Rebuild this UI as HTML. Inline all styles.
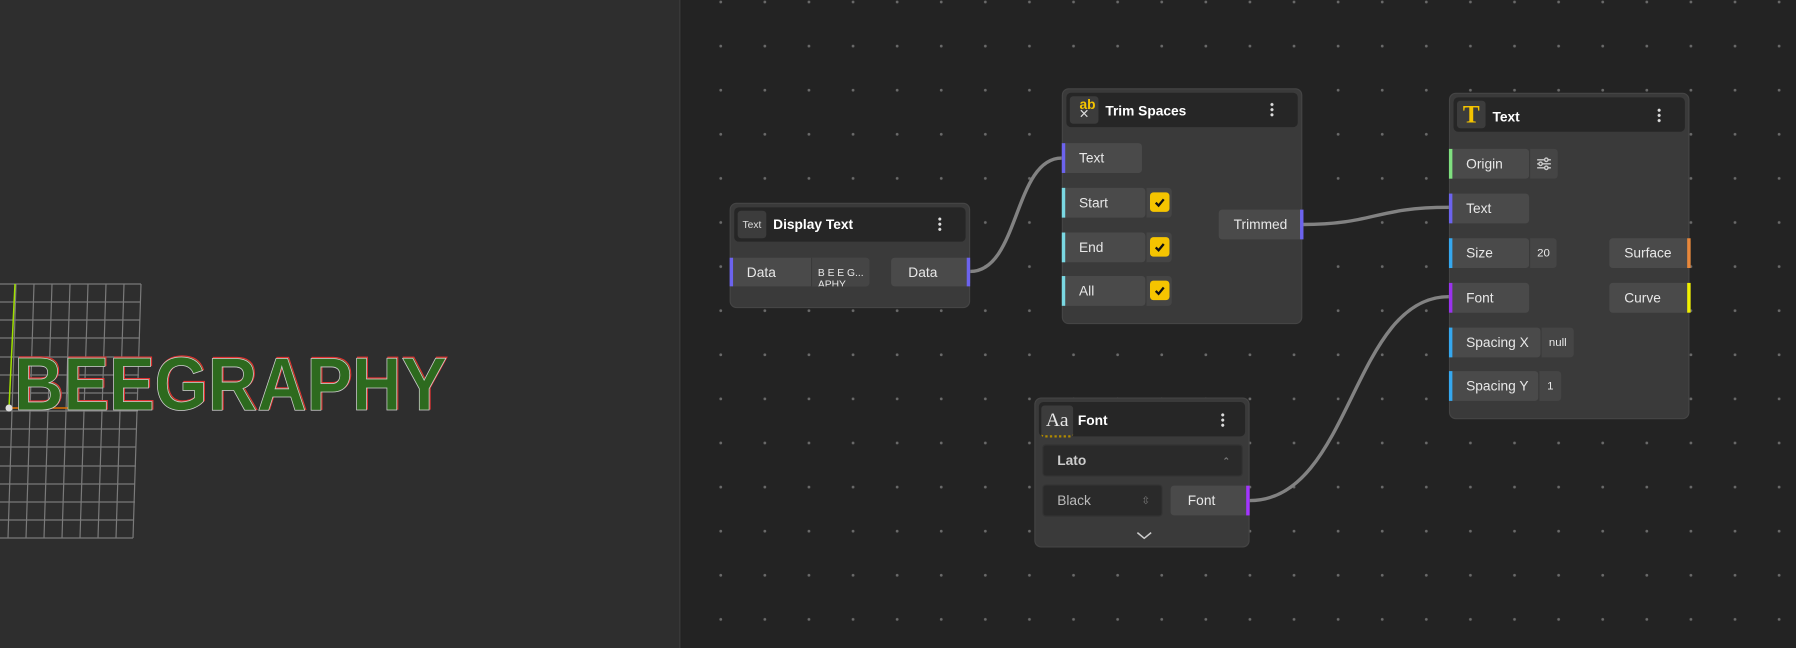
<!DOCTYPE html>
<html><head><meta charset="utf-8"><style>
*{margin:0;padding:0;box-sizing:border-box}
body{width:1796px;height:648px;overflow:hidden;background:#232323;font-family:"Liberation Sans",sans-serif;position:relative}
#w{position:absolute;left:0;top:0;width:1568px;height:566px;transform:scale(1.14541);transform-origin:0 0}
.left{position:absolute;left:0;top:0;width:594px;height:566px;background:#2e2e2e;border-right:1px solid #3c3c3c}
.canvas{position:absolute;left:595px;top:0;right:0;bottom:0;background-color:#232323;background-image:radial-gradient(circle,#6a6a6a 0 1.1px,transparent 1.4px);background-size:38.5px 38.5px;background-position:15px 21px}
.a{position:absolute}
.node{position:absolute;background:#3a3a3a;border-radius:6px;border:1px solid #454545}
.hd{position:absolute;background:#262626;border-radius:4px}
.ic{position:absolute;background:#3c3c3c;border-radius:3px;color:#ddd;font-size:9px;display:flex;align-items:center;justify-content:center}
.tt{position:absolute;color:#fff;font-weight:bold;font-size:12px}
.dots{position:absolute;width:3px;height:13px;background:radial-gradient(circle,#ddd 1.2px,transparent 1.5px) 0 0/3px 4.5px repeat-y}
.r{position:absolute;background:#4a4a4a;border-radius:3px;color:#e8e8e8;font-size:12px;display:flex;align-items:center;padding-left:15px;height:26px}
.v{position:absolute;background:#454545;border-radius:0 3px 3px 0;border-left:1px solid #3a3a3a;color:#e8e8e8;font-size:10px;display:flex;align-items:center;justify-content:center;height:26px}
.bl{position:absolute;left:0;top:0;width:3px;height:100%}
.br{position:absolute;right:0;top:0;width:3px;height:100%}
.cb{position:absolute;left:3px;top:4px;width:17px;height:17px;background:#f5c400;border-radius:3px}
.sel{position:absolute;background:#2a2a2a;border-radius:3px;border:1px solid #333;color:#bbb;font-size:12px;display:flex;align-items:center;padding-left:12px}
</style></head><body>
<div id="w">
<div class="left"></div>
<div class="canvas"></div>

<svg class="a" style="left:0;top:0" width="1568" height="566">
<g fill="none" stroke="#828282" stroke-width="3">
<path d="M847,237 C890,237 885,138 927,138"/>
<path d="M1137,196 C1200,196 1200,181 1265,181"/>
<path d="M1091,437 C1180,437 1180,259 1265,259"/>
</g></svg>

<!-- Display Text -->
<div class="node" style="left:637px;top:177px;width:210px;height:92px">
<div class="hd" style="left:3px;top:3px;width:202px;height:30px"></div>
<div class="ic" style="left:6px;top:6px;width:25px;height:24px">Text</div>
<div class="tt" style="left:37px;top:11px">Display Text</div>
<div class="dots" style="left:181px;top:11px"></div>
<div class="r" style="left:-1px;top:47px;width:122px;height:25px">Data<div class="bl" style="background:#6c63ee"></div></div>
<div class="v" style="left:70px;top:47px;width:51px;height:25px;font-size:9px;overflow:hidden;align-items:flex-start;padding-top:8px;line-height:10px;justify-content:flex-start;padding-left:5px">B E E G...<br>APHY</div>
<div class="r" style="left:140px;top:47px;width:69px;height:25px">Data<div class="br" style="background:#6c63ee"></div></div>
</div>

<!-- Trim Spaces -->
<div class="node" style="left:927px;top:77px;width:210px;height:206px">
<div class="hd" style="left:3px;top:3px;width:202px;height:30px"></div>
<div class="ic" style="left:6px;top:6px;width:25px;height:24px;flex-direction:column;line-height:9px"><span style="color:#f5c400;font-size:12px;font-weight:bold;margin-left:6px">ab</span><span style="font-size:11px">✕</span></div>
<div class="tt" style="left:37px;top:12px">Trim Spaces</div>
<div class="dots" style="left:181px;top:11px"></div>
<div class="r" style="left:-1px;top:47px;width:70px">Text<div class="bl" style="background:#6c63ee"></div></div>
<div class="r" style="left:-1px;top:86px;width:73px">Start<div class="bl" style="background:#7ad8e2"></div></div>
<div class="v" style="left:72px;top:86px;width:23px"><div class="cb"><svg width="17" height="17"><path d="M5 9l2.5 2.5L12 6" stroke="#111" stroke-width="2" fill="none"/></svg></div></div>
<div class="r" style="left:-1px;top:125px;width:73px">End<div class="bl" style="background:#7ad8e2"></div></div>
<div class="v" style="left:72px;top:125px;width:23px"><div class="cb"><svg width="17" height="17"><path d="M5 9l2.5 2.5L12 6" stroke="#111" stroke-width="2" fill="none"/></svg></div></div>
<div class="r" style="left:-1px;top:163px;width:73px">All<div class="bl" style="background:#7ad8e2"></div></div>
<div class="v" style="left:72px;top:163px;width:23px"><div class="cb"><svg width="17" height="17"><path d="M5 9l2.5 2.5L12 6" stroke="#111" stroke-width="2" fill="none"/></svg></div></div>
<div class="r" style="left:136px;top:105px;width:74px;padding-left:13px">Trimmed<div class="br" style="background:#6c63ee"></div></div>
</div>

<!-- Text node -->
<div class="node" style="left:1265px;top:81px;width:210px;height:285px">
<div class="hd" style="left:3px;top:3px;width:202px;height:30px"></div>
<div class="ic" style="left:6px;top:6px;width:25px;height:24px;font-family:'Liberation Serif',serif;font-size:22px;font-weight:bold;color:#f5c400">T</div>
<div class="tt" style="left:37px;top:13px">Text</div>
<div class="dots" style="left:181px;top:12px"></div>
<div class="r" style="left:-1px;top:48px;width:70px">Origin<div class="bl" style="background:#7fe07f"></div></div>
<div class="v" style="left:69px;top:48px;width:25px"><svg width="14" height="12"><g stroke="#ccc" stroke-width="1.2" fill="#454545"><path d="M1 2.5h12M1 6h12M1 9.5h12"/><circle cx="9" cy="2.5" r="1.5"/><circle cx="4" cy="6" r="1.5"/><circle cx="9" cy="9.5" r="1.5"/></g></svg></div>
<div class="r" style="left:-1px;top:87px;width:70px">Text<div class="bl" style="background:#6c63ee"></div></div>
<div class="r" style="left:-1px;top:126px;width:70px">Size<div class="bl" style="background:#35a8ef"></div></div>
<div class="v" style="left:69px;top:126px;width:24px">20</div>
<div class="r" style="left:139px;top:126px;width:71px;padding-left:13px">Surface<div class="br" style="background:#e8873a"></div></div>
<div class="r" style="left:-1px;top:165px;width:70px">Font<div class="bl" style="background:#9a32ee"></div></div>
<div class="r" style="left:139px;top:165px;width:71px;padding-left:13px">Curve<div class="br" style="background:#f0f000"></div></div>
<div class="r" style="left:-1px;top:204px;width:80px">Spacing X<div class="bl" style="background:#35a8ef"></div></div>
<div class="v" style="left:79px;top:204px;width:29px">null</div>
<div class="r" style="left:-1px;top:242px;width:78px">Spacing Y<div class="bl" style="background:#35a8ef"></div></div>
<div class="v" style="left:77px;top:242px;width:20px">1</div>
</div>

<!-- Font node -->
<div class="node" style="left:903px;top:347px;width:188px;height:131px">
<div class="hd" style="left:3px;top:3px;width:180px;height:30px"></div>
<div class="ic" style="left:5px;top:6px;width:28px;height:28px;font-family:'Liberation Serif',serif;font-size:17px;color:#e8e8e8;border-bottom:2px dotted #b08a00">Aa</div>
<div class="tt" style="left:37px;top:12px">Font</div>
<div class="dots" style="left:162px;top:12px"></div>
<div class="sel" style="left:6px;top:40px;width:175px;height:28px;font-weight:bold;color:#ccc">Lato<span style="position:absolute;right:10px;font-size:8px;color:#777">⌃<br></span></div>
<div class="sel" style="left:6px;top:75px;width:105px;height:28px">Black<span style="position:absolute;right:10px;font-size:9px;color:#777">⇳</span></div>
<div class="r" style="left:118px;top:76px;width:69px;height:26px;padding-left:15px">Font<div class="br" style="background:#a335ff"></div></div>
<svg class="a" style="left:88px;top:116px" width="14" height="8"><path d="M1 1l6 5 6-5" stroke="#ccc" stroke-width="1.3" fill="none"/></svg>
</div>
</div>

<!-- viewport geometry in original coords -->
<svg class="a" style="left:0;top:0" width="680" height="648">
<g stroke="#7a7a7a" stroke-width="1.2" fill="none">
<path d="M-2,284L-10,538M16,284L8,538M34,284L26,538M52,284L44,538M70,284L62,538M88,284L80,538M106,284L98,538M124,284L116,538M141,284L133,538"/>
<path d="M-10,284H141M-10,302H141M-10,320H140M-10,338H140M-10,357H139M-10,375H139M-10,393H138M-10,411H138M-10,429H137M-10,447H136M-10,466H136M-10,484H135M-10,502H135M-10,520H134M-10,538H133"/>
</g>
<line x1="15" y1="284" x2="9" y2="408" stroke="#a0e000" stroke-width="1.5"/>
<line x1="9" y1="408" x2="100" y2="408" stroke="#e07000" stroke-width="1.5"/>
<text x="14" y="410" font-family="Liberation Sans,sans-serif" font-weight="bold" font-size="75" textLength="433" lengthAdjust="spacingAndGlyphs" fill="#2d6a1e" stroke="#e03030" stroke-width="1.2" transform="translate(1,-1)">BEEGRAPHY</text>
<text x="14" y="410" font-family="Liberation Sans,sans-serif" font-weight="bold" font-size="75" textLength="433" lengthAdjust="spacingAndGlyphs" fill="#2d6a1e" stroke="#cfcfcf" stroke-width="0.8">BEEGRAPHY</text>
<circle cx="9" cy="408" r="3.5" fill="#ddd"/>
</svg>
</body></html>
